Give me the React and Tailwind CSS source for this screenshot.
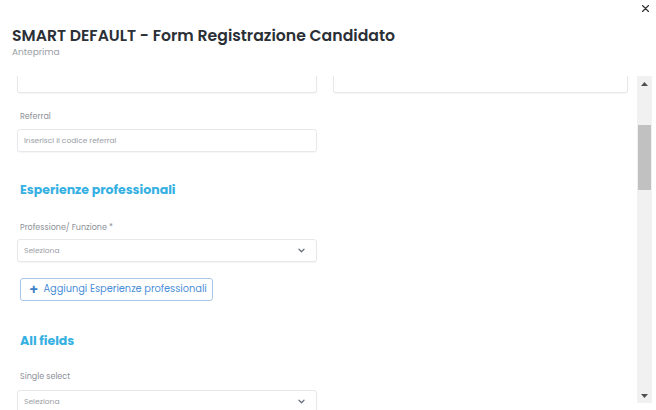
import React from "react";

const font = { fontFamily: "Poppins, 'Noto Sans', Inter, sans-serif" };

function Chevron() {
  return (
    <svg width="7" height="5" viewBox="0 0 7 5" className="text-[#6b7280]">
      <path d="M1 1.2 L3.5 3.7 L6 1.2" fill="none" stroke="currentColor" strokeWidth="1.3" strokeLinecap="round" strokeLinejoin="round" />
    </svg>
  );
}

function Input({ placeholder, select }) {
  return (
    <div className="flex h-[23px] w-[300px] items-center justify-between rounded-[3px] border border-[#e6e8eb] bg-white pl-[6px] pr-[11px] shadow-[0_1px_1px_rgba(0,0,0,0.04)]">
      <span className="text-[7.5px] text-[#9a9ea6]">{placeholder}</span>
      {select && <Chevron />}
    </div>
  );
}

export default function App() {
  return (
    <div className="relative h-[410px] w-[656px] overflow-hidden bg-white" style={font}>
      <div className="absolute right-[7px] top-[5px]">
        <svg width="7" height="7" viewBox="0 0 7 7">
          <path d="M0.5 0.5 L6.5 6.5 M6.5 0.5 L0.5 6.5" stroke="#333" strokeWidth="1.2" strokeLinecap="round" />
        </svg>
      </div>
      <div className="px-[12px] pt-[26px]">
        <h1 className="text-[15.7px] font-semibold leading-[20px] text-[#2b2f36]">
          SMART DEFAULT - Form Registrazione Candidato
        </h1>
        <p className="text-[9px] leading-[12px] text-[#9a9ea6]">Anteprima</p>
      </div>
      <div className="mt-[18px] flex h-[334px]">
        <div className="w-[637px] overflow-hidden pl-[17px]">
          <div className="-mt-[6px] flex gap-[16px]">
            <div className="h-[23px] w-[300px] rounded-b-[3px] border border-t-0 border-[#e6e8eb] shadow-[0_1px_1px_rgba(0,0,0,0.04)]" />
            <div className="h-[23px] w-[295px] rounded-b-[3px] border border-t-0 border-[#e6e8eb] shadow-[0_1px_1px_rgba(0,0,0,0.04)]" />
          </div>
          <div className="pl-[3px] pt-[19px] text-[8px] leading-[10px] text-[#8d9198]">Referral</div>
          <div className="mt-[7px]">
            <Input placeholder="Inserisci il codice referral" />
          </div>
          <h2 className="mt-[30px] pl-[3px] text-[12.5px] font-bold leading-[16px] text-[#35b0e2]">
            Esperienze professionali
          </h2>
          <div className="mt-[25px] pl-[3px] text-[8px] leading-[10px] text-[#8d9198]">Professione/ Funzione *</div>
          <div className="mt-[6px]">
            <Input placeholder="Seleziona" select />
          </div>
          <div className="mt-[16px] pl-[3px]">
            <div className="flex h-[23px] w-[193px] items-center gap-[5px] rounded-[3px] border border-[#aac6e8] pl-[8px] text-[9.8px] text-[#4a8ed8]">
              <span className="text-[14px] font-semibold leading-[13px] text-[#3d7fc9]">+</span>
              <span>Aggiungi Esperienze professionali</span>
            </div>
          </div>
          <h2 className="mt-[32px] pl-[3px] text-[12.5px] font-bold leading-[16px] text-[#35b0e2]">All fields</h2>
          <div className="mt-[23px] pl-[3px] text-[8px] leading-[10px] text-[#8d9198]">Single select</div>
          <div className="mt-[8px]">
            <Input placeholder="Seleziona" select />
          </div>
        </div>
        <div className="flex h-[327px] w-[15px] flex-col bg-[#f1f1f1]">
          <div className="flex h-[15px] items-center justify-center">
            <svg width="7" height="4" viewBox="0 0 7 4"><path d="M0 4 L3.5 0 L7 4 Z" fill="#505050" /></svg>
          </div>
          <div className="mx-[1px] mt-[34px] h-[65px] bg-[#c1c1c1]" />
          <div className="flex-1" />
          <div className="flex h-[15px] items-center justify-center">
            <svg width="7" height="4" viewBox="0 0 7 4"><path d="M0 0 L3.5 4 L7 0 Z" fill="#505050" /></svg>
          </div>
        </div>
      </div>
    </div>
  );
}
